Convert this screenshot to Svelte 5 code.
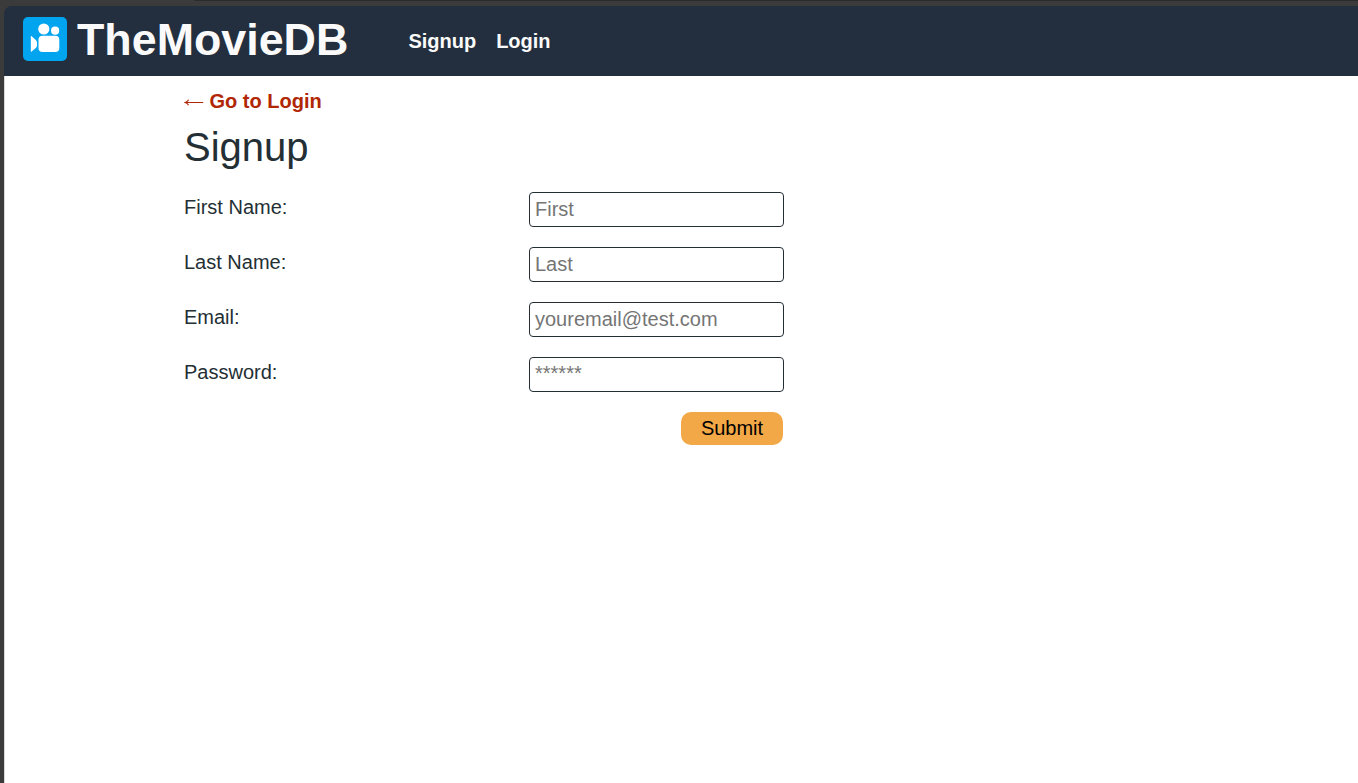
<script>
  const fields = [
    { id: 'first', label: 'First Name:', type: 'text', hint: 'First' },
    { id: 'last', label: 'Last Name:', type: 'text', hint: 'Last' },
    { id: 'email', label: 'Email:', type: 'email', hint: 'youremail@test.com' },
    { id: 'password', label: 'Password:', type: 'password', hint: '******' }
  ];
</script>

<div class="frame">
  <div class="tabline"></div>
  <div class="page">
    <header>
      <svg class="logo" viewBox="0 0 44 44" aria-hidden="true">
        <rect width="44" height="44" rx="5" fill="#00a4ef" />
        <g fill="#fff">
          <circle cx="20.8" cy="12" r="5.6" />
          <circle cx="32.1" cy="13.7" r="4.1" />
          <rect x="15.5" y="18.8" width="20.8" height="16.2" rx="4" />
          <path d="M7.8 19.6Q7.8 18.7 8.7 19.2L12.8 22.9Q14 24.1 14 25.6V28.4Q14 29.9 12.8 31.1L8.7 34.6Q7.8 35.1 7.8 34.2Z" />
        </g>
      </svg>
      <span class="brand">TheMovieDB</span>
      <nav>
        <a href="#signup">Signup</a>
        <a href="#login">Login</a>
      </nav>
    </header>
    <main>
      <a class="back" href="#login">
        <svg viewBox="0 0 20 12" aria-hidden="true">
          <path d="M1.5 6.5H19.2M4.6 3.8Q3.6 5.7 1.3 6.5Q3.6 7.3 4.6 9.2" fill="none" stroke="currentColor" stroke-width="1.1" />
        </svg>
        <span>Go to Login</span>
      </a>
      <h1>Signup</h1>
      <form onsubmit={(e) => e.preventDefault()}>
        {#each fields as f}
          <div class="row">
            <label for={f.id}>{f.label}</label>
            <input id={f.id} type={f.type} placeholder={f.hint} />
          </div>
        {/each}
        <button type="submit">Submit</button>
      </form>
    </main>
  </div>
</div>

<style>
  :global(body) {
    margin: 0;
    overflow: hidden;
  }
  .frame {
    box-sizing: border-box;
    height: 783px;
    padding-left: 4px;
    background: #3b3b3b;
    font-family: "Liberation Sans", Arial, sans-serif;
    font-size: 20px;
    line-height: 23px;
    color: #232f3e;
  }
  .tabline {
    height: 1px;
    margin-left: 190px;
    margin-bottom: 5px;
    background: #2b2b2b;
  }
  header {
    box-sizing: border-box;
    display: flex;
    align-items: center;
    height: 70px;
    padding: 0 0 4px 19px;
    border-top-left-radius: 8px;
    background: #232f3e;
    color: #fafafa;
    font-weight: bold;
  }
  .logo {
    width: 44px;
    height: 44px;
    flex: none;
  }
  .brand {
    width: 271px;
    margin: 1px 0 0 10px;
    font-size: 44.8px;
    line-height: 51px;
  }
  nav {
    display: flex;
    gap: 20px;
    margin: 5px 0 0 60.4px;
  }
  a {
    color: inherit;
    text-decoration: none;
  }
  main {
    box-sizing: border-box;
    height: 707px;
    padding: 14px 0 0 179px;
    border-left: 1px solid #d8d8d8;
    background: #fff;
  }
  .back {
    display: flex;
    align-items: center;
    gap: 5.5px;
    width: max-content;
    color: #b12704;
    font-weight: bold;
  }
  .back svg {
    width: 20px;
    height: 12px;
    margin-top: 1px;
  }
  h1 {
    margin: 11px 0 22px;
    font-size: 40px;
    line-height: 46px;
    font-weight: normal;
    color: #232f34;
  }
  form {
    display: flex;
    flex-direction: column;
    gap: 20px;
    width: 600px;
  }
  .row {
    display: flex;
    justify-content: space-between;
    height: 35px;
    color: #232f34;
  }
  label {
    padding-top: 4px;
  }
  input {
    box-sizing: border-box;
    width: 255px;
    height: 35px;
    padding: 0 5px;
    border: 1px solid #232f34;
    border-radius: 4px;
    background: #fff;
    font: inherit;
    outline: none;
  }
  input[type="password"] {
    padding-bottom: 2px;
  }
  input::placeholder {
    color: #757575;
  }
  button {
    align-self: flex-end;
    width: 102px;
    height: 33px;
    margin-right: 1px;
    padding: 0;
    border: 0;
    border-radius: 10px;
    background: #f3a847;
    color: #000;
    font: inherit;
  }
</style>
